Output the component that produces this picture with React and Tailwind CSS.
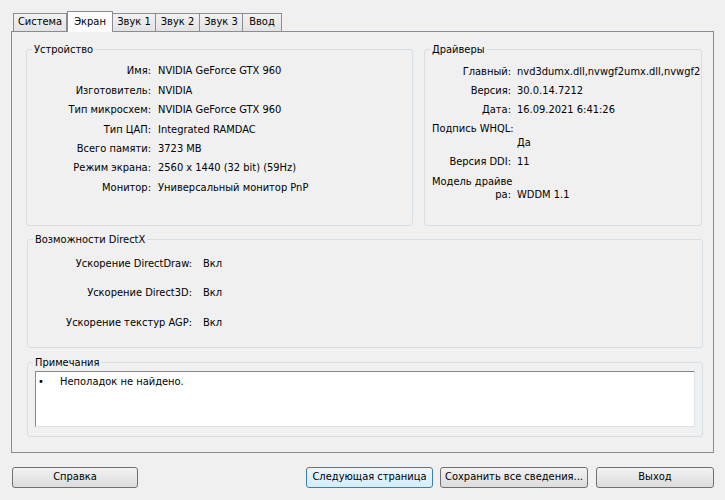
import React from 'react';

const font = { fontFamily: '"DejaVu Sans Condensed", "DejaVu Sans", sans-serif' };

const tabs = ['Система', 'Экран', 'Звук 1', 'Звук 2', 'Звук 3', 'Ввод'];
const tabWidths = ['w-[54px]', 'w-[46px]', 'w-[44px]', 'w-[45px]', 'w-[44px]', 'w-[40px]'];

const device = [
  ['Имя:', 'NVIDIA GeForce GTX 960'],
  ['Изготовитель:', 'NVIDIA'],
  ['Тип микросхем:', 'NVIDIA GeForce GTX 960'],
  ['Тип ЦАП:', 'Integrated RAMDAC'],
  ['Всего памяти:', '3723 MB'],
  ['Режим экрана:', '2560 x 1440 (32 bit) (59Hz)'],
  ['Монитор:', 'Универсальный монитор PnP'],
];

const directx = [
  ['Ускорение DirectDraw:', 'Вкл'],
  ['Ускорение Direct3D:', 'Вкл'],
  ['Ускорение текстур AGP:', 'Вкл'],
];

const Group = ({ title, className, children }) => (
  <fieldset className={`border border-[#d5dfe5] rounded-[3px] ${className}`}>
    <legend className="ml-[5px] px-[2px] text-[11px] leading-[13px] text-black">{title}</legend>
    {children}
  </fieldset>
);

const Button = ({ children, className, primary }) => (
  <button
    className={`h-[21px] rounded-[3px] border text-[11px] text-black ${
      primary
        ? 'border-[#3c7fb1] bg-gradient-to-b from-[#eaf6fd] to-[#d4ecfa]'
        : 'border-[#707070] bg-gradient-to-b from-[#f2f2f2] to-[#dcdcdc]'
    } ${className}`}
  >
    {children}
  </button>
);

const DriverRow = ({ label, value, h, mt = '' }) => (
  <div className={`flex ${h} ${mt}`}>
    <div className="w-[79px] text-right whitespace-nowrap">{label}</div>
    <div className="ml-[6px] whitespace-nowrap">{value}</div>
  </div>
);

export default function App() {
  return (
    <div className="w-[725px] h-[500px] bg-[#f0f0f0] text-black text-[11px]" style={font}>
      <div className="pt-[11px] px-[11px]">
        {/* tabs */}
        <div className="flex items-end h-[20px] pl-[2px]">
          {tabs.map((t, i) =>
            i === 1 ? (
              <div
                key={t}
                className={`${tabWidths[i]} h-[21px] -mb-[1px] relative z-10 bg-[#fcfcfc] border border-[#898c95] border-b-0 flex items-center justify-center text-[11px]`}
              >
                {t}
              </div>
            ) : (
              <div
                key={t}
                className={`${tabWidths[i]} h-[18px] bg-gradient-to-b from-[#f2f2f2] to-[#e3e3e3] border border-[#898c95] border-b-0 -ml-[1px] first:ml-0 flex items-center justify-center text-[11px]`}
              >
                {t}
              </div>
            )
          )}
        </div>

        {/* panel */}
        <div className="w-[703px] h-[422px] border border-[#898c95] bg-[#f0f0f0] pt-[11px] pl-[14px] pr-[10px]">
          <div className="flex gap-[11px]">
            <Group title="Устройство" className="w-[387px] h-[183px]">
              <div className="grid grid-cols-[124px_1fr] gap-x-[7px] auto-rows-[19.4px] items-center mt-[6px]">
                {device.map(([l, v]) => (
                  <React.Fragment key={l}>
                    <div className="text-right whitespace-nowrap">{l}</div>
                    <div className="whitespace-nowrap">{v}</div>
                  </React.Fragment>
                ))}
              </div>
            </Group>

            <Group title="Драйверы" className="w-[278px] h-[183px]">
              <div className="pl-[7px] mt-[6px] flex flex-col">
                <DriverRow label="Главный:" value="nvd3dumx.dll,nvwgf2umx.dll,nvwgf2" h="h-[19px] leading-[19px]" />
                <DriverRow label="Версия:" value="30.0.14.7212" h="h-[19px] leading-[19px]" />
                <DriverRow label="Дата:" value="16.09.2021 6:41:26" h="h-[19px] leading-[19px]" />
                <div className="h-[19px] leading-[19px] whitespace-nowrap">Подпись WHQL:</div>
                <DriverRow label="" value="Да" h="h-[9px] leading-[9px]" />
                <DriverRow label="Версия DDI:" value="11" h="h-[19px] leading-[19px]" mt="mt-[5px]" />
                <div className="h-[13px] leading-[13px] mt-[4px] whitespace-nowrap">Модель драйве</div>
                <DriverRow label="ра:" value="WDDM 1.1" h="h-[13px] leading-[13px]" />
              </div>
            </Group>
          </div>

          <Group title="Возможности DirectX" className="mt-[7px] ml-[1px] w-[676px] h-[115px]">
            <div className="grid grid-cols-[164px_1fr] gap-x-[11px] auto-rows-[29.5px] items-center mt-[3px]">
              {directx.map(([l, v]) => (
                <React.Fragment key={l}>
                  <div className="text-right whitespace-nowrap">{l}</div>
                  <div>{v}</div>
                </React.Fragment>
              ))}
            </div>
          </Group>

          <Group title="Примечания" className="mt-[8px] ml-[1px] w-[676px] h-[81px]">
            <div className="mx-[7px] mt-[2px] h-[56px] bg-white border border-[#828790] border-r-[#dfe3e8] border-b-[#dfe3e8] flex items-start pt-[3px]">
              <span className="w-[24px] pl-[2px] leading-[13px]">•</span>
              <span className="leading-[13px]">Неполадок не найдено.</span>
            </div>
          </Group>
        </div>
      </div>

      {/* buttons */}
      <div className="flex mt-[14px] pl-[12px]">
        <Button className="w-[126px]">Справка</Button>
        <Button primary className="w-[127px] ml-[168px]">Следующая страница</Button>
        <Button className="w-[148px] ml-[7px]">Сохранить все сведения...</Button>
        <Button className="w-[118px] ml-[8px]">Выход</Button>
      </div>
    </div>
  );
}
